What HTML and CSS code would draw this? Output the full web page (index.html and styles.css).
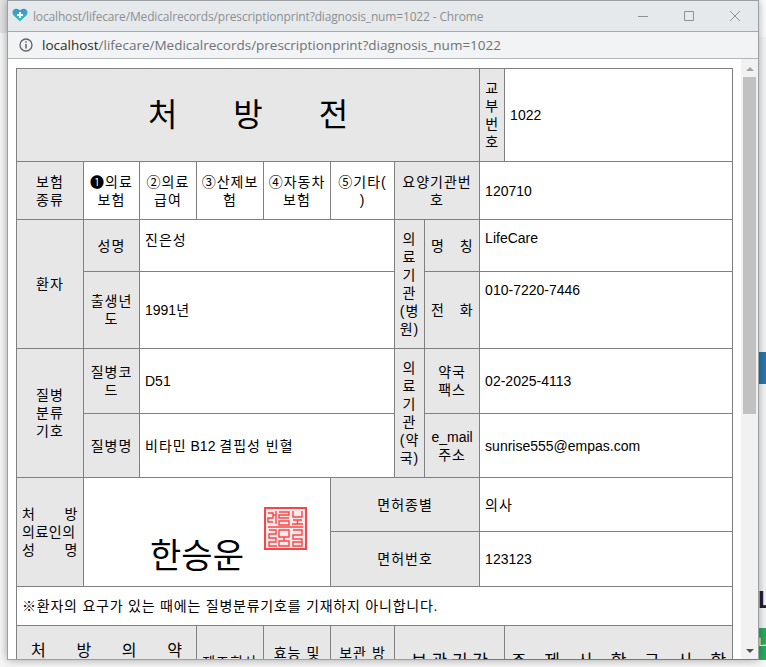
FILE: index.html
```html
<!DOCTYPE html>
<html lang="ko">
<head>
<meta charset="utf-8">
<title>처방전</title>
<link rel="stylesheet" href="styles.css">
</head>
<body>
<div class="desktop">
  <div class="bg-left"></div>
  <div class="bg-right-a"></div>
  <div class="bg-blue"></div>
  <div class="bg-letter">L</div>
  <div class="bg-green">나</div>
  <div class="window">
    <div class="titlebar">
      <svg class="heart" width="16" height="14" viewBox="0 0 16 14"><defs><linearGradient id="hg" x1="0" y1="0" x2="0" y2="1"><stop offset="0" stop-color="#3f8fd0"/><stop offset="1" stop-color="#35c9ae"/></linearGradient></defs><path d="M8 13.500 1.600 7.400C-.4 5.300.3 1.800 3 .9 4.900.3 6.800 1 8 2.600 9.200 1 11.100.3 13 .9c2.700.9 3.400 4.400 1.400 6.500z" fill="url(#hg)"/><path d="M7 4h2v2h2v2H9v2H7V8H5V6h2z" fill="#fff"/></svg>
      <span class="wintitle">localhost/lifecare/Medicalrecords/prescriptionprint?diagnosis_num=1022 - Chrome</span>
      <div class="winctl">
        <svg width="12" height="12" viewBox="0 0 12 12"><path d="M1 6.500h10" stroke="#8d9195" fill="none"/></svg>
        <svg width="12" height="12" viewBox="0 0 12 12"><path d="M1.500 1.500h9v9h-9z" stroke="#8d9195" fill="none"/></svg>
        <svg width="12" height="12" viewBox="0 0 12 12"><path d="M1 1l10 10M11 1 1 11" stroke="#8d9195" fill="none"/></svg>
      </div>
    </div>
    <div class="addressbar">
      <svg width="14" height="14" viewBox="0 0 14 14"><circle cx="7" cy="7" r="6" stroke="#5f6368" stroke-width="1.300" fill="none"/><path d="M7 6v4.500" stroke="#5f6368" stroke-width="1.500"/><path d="M7 3.300v1.500" stroke="#5f6368" stroke-width="1.500"/></svg>
      <span class="url"><span class="host">localhost</span>/lifecare/Medicalrecords/prescriptionprint?diagnosis_num=1022</span>
    </div>
    <div class="viewport">
      <div class="page">
        <table class="rx">
          <colgroup>
            <col class="c1"><col class="c2"><col class="c3"><col class="c4"><col class="c5"><col class="c6"><col class="c7"><col class="c8"><col class="c9"><col class="c10">
          </colgroup>
          <tr class="r1">
            <th colspan="8" class="ko title">처 방 전</th>
            <th class="ko vert">교<br>부<br>번<br>호</th>
            <td>1022</td>
          </tr>
          <tr class="r2">
            <th class="ko">보험<br>종류</th>
            <td class="ko ctr">❶의료<br>보험</td>
            <td class="ko ctr">②의료<br>급여</td>
            <td class="ko ctr">③산제보<br>험</td>
            <td class="ko ctr">④자동차<br>보험</td>
            <td class="ko ctr">⑤기타(<br>)</td>
            <th colspan="2" class="ko">요양기관번<br>호</th>
            <td colspan="2">120710</td>
          </tr>
          <tr class="r3">
            <th rowspan="2" class="ko">환자</th>
            <th class="ko">성명</th>
            <td colspan="4" class="ko top name">진은성</td>
            <th rowspan="2" class="ko tight">의<br>료<br>기<br>관<br>(병<br>원)</th>
            <th class="ko just">명 칭</th>
            <td colspan="2" class="top">LifeCare</td>
          </tr>
          <tr class="r4">
            <th class="ko">출생년<br>도</th>
            <td colspan="4">1991<span class="ko">년</span></td>
            <th class="ko just">전 화</th>
            <td colspan="2" class="top phone">010-7220-7446</td>
          </tr>
          <tr class="r5">
            <th rowspan="2" class="ko">질병<br>분류<br>기호</th>
            <th class="ko">질병코<br>드</th>
            <td colspan="4">D51</td>
            <th rowspan="2" class="ko tight">의<br>료<br>기<br>관<br>(약<br>국)</th>
            <th class="ko">약국<br>팩스</th>
            <td colspan="2">02-2025-4113</td>
          </tr>
          <tr class="r6">
            <th class="ko">질병명</th>
            <td colspan="4"><span class="ko">비타민</span> B12 <span class="ko">결핍성 빈혈</span></td>
            <th>e_mail<br><span class="ko">주소</span></th>
            <td colspan="2">sunrise555@empas.com</td>
          </tr>
          <tr class="r7">
            <th rowspan="2" class="ko just doctor">처 방<br>의료인의<br>성 명</th>
            <td rowspan="2" colspan="4" class="signer">
              <span class="signame">한승운</span>
              <svg class="seal" width="43" height="43" viewBox="0 0 43 43" fill="#fde9e9" stroke="#f4474a"><rect x="1" y="1" width="41" height="41" stroke-width="2"/><g stroke-width="1.400" fill="none"><path d="M4 6h5v5H4v4h5M12 4v13M9 8h3M15 5h10v3H15v3h10M15 14h10v4H15zM29 4v6h9V4M29 13h9M33.500 13v4M28 17h11M4 20h35M5 23h7v4H5v4h7v4H5v4h8M15 23h10v7H15zM20 30v4M15 34h10v5H15zM29 23h9v5h-9v4h9v7h-9v-4h9"/></g></svg>
            </td>
            <th colspan="3" class="ko">면허종별</th>
            <td colspan="2" class="ko">의사</td>
          </tr>
          <tr class="r8">
            <th colspan="3" class="ko">면허번호</th>
            <td colspan="2">123123</td>
          </tr>
          <tr class="r9">
            <td colspan="10" class="note ko">※환자의 요구가 있는 때에는 질병분류기호를 기재하지 아니합니다.</td>
          </tr>
          <tr class="r10">
            <th colspan="3" class="ko big just wide">처 방 의 약<br>품 의 명 칭</th>
            <th class="ko">제조회사</th>
            <th class="ko">효능 및<br>효과</th>
            <th class="ko">보관 방<br>법</th>
            <th colspan="3" class="ko big">보 관 기 간</th>
            <th class="ko big just">주 제 사 항 구 사 항</th>
          </tr>
        </table>
      </div>
      <div class="scrollbar">
        <div class="arrow-up"></div>
        <div class="thumb"></div>
        <div class="arrow-down"></div>
      </div>
    </div>
  </div>
  <div class="bg-greenline"></div>
</div>
</body>
</html>
```
FILE: styles.css
```css
html, body {
  margin: 0;
  padding: 0;
  height: 100%;
  overflow: hidden;
}
.desktop {
  position: relative;
  width: 766px;
  height: 667px;
  overflow: hidden;
  background: #f7f7f7;
  font-family: "Liberation Sans", "Noto Sans CJK KR", sans-serif;
}
.bg-left {
  position: absolute;
  left: 0;
  top: 0;
  width: 7px;
  height: 33px;
  background: #e4e4e4;
}
.bg-right-a {
  position: absolute;
  right: 0;
  top: 0;
  width: 8px;
  height: 37px;
  background: #ffffff;
}
.bg-blue {
  position: absolute;
  right: 0;
  top: 352px;
  width: 8px;
  height: 32px;
  background: #2a78ad;
}
.bg-letter {
  position: absolute;
  left: 758px;
  top: 588px;
  font-size: 24px;
  line-height: 24px;
  font-weight: 700;
  color: #222222;
}
.bg-green {
  position: absolute;
  left: 758px;
  top: 628px;
  width: 8px;
  height: 32px;
  overflow: hidden;
  background: #27ae60;
  color: #ffffff;
  font-size: 14px;
  line-height: 30px;
}
.bg-greenline {
  position: absolute;
  left: 452px;
  top: 659px;
  width: 306px;
  height: 1px;
  background: #4f8f6f;
}
.window {
  position: absolute;
  left: 7px;
  top: 0;
  width: 750px;
  height: 658px;
  display: flex;
  flex-direction: column;
  border: 1px solid #9a9fa3;
  background: #ffffff;
  box-shadow: 0 0 9px rgba(0, 0, 0, 0.35);
}
.titlebar {
  height: 30px;
  flex: none;
  display: flex;
  align-items: center;
  padding-left: 4px;
  background: #e6e9eb;
  border-bottom: 1px solid #a6aaad;
}
.heart {
  flex: none;
  margin-right: 5px;
  margin-top: -2px;
}
.wintitle {
  flex: 1;
  font-family: "Open Sans", sans-serif;
  font-size: 12px;
  letter-spacing: -0.16px;
  color: #8b8f92;
  white-space: nowrap;
}
.winctl {
  display: flex;
  align-items: center;
  gap: 34px;
  padding-right: 17px;
}
.addressbar {
  height: 26px;
  flex: none;
  display: flex;
  align-items: center;
  gap: 9px;
  padding-left: 11px;
  background: #f1f3f4;
  border-bottom: 1px solid #b4b7b9;
}
.url {
  font-family: "Open Sans", sans-serif;
  font-size: 13.5px;
  color: #6e7276;
  white-space: nowrap;
}
.host {
  color: #2b2b2b;
}
.viewport {
  flex: 1;
  min-height: 0;
  display: flex;
}
.page {
  flex: 1;
  min-width: 0;
  overflow: hidden;
  padding: 9px 0 0 8px;
}
.scrollbar {
  width: 17px;
  flex: none;
  display: flex;
  flex-direction: column;
  align-items: center;
  background: #f1f1f1;
  position: relative;
}
.arrow-up {
  flex: none;
  width: 0;
  height: 0;
  margin-top: 8px;
  border-left: 4px solid transparent;
  border-right: 4px solid transparent;
  border-bottom: 4px solid #a3a3a3;
}
.thumb {
  flex: none;
  width: 13px;
  height: 337px;
  margin-top: 6px;
  background: #c1c1c1;
}
.arrow-down {
  flex: none;
  width: 0;
  height: 0;
  margin-top: auto;
  margin-bottom: 6px;
  border-left: 4px solid transparent;
  border-right: 4px solid transparent;
  border-top: 4px solid #505050;
}
.rx {
  table-layout: fixed;
  border-collapse: collapse;
  width: 717px;
  font-size: 14px;
  line-height: 18px;
  color: #000000;
}
.c1 { width: 67px; }
.c2 { width: 56px; }
.c3 { width: 57px; }
.c4 { width: 67px; }
.c5 { width: 67px; }
.c6 { width: 64px; }
.c7 { width: 30px; }
.c8 { width: 55px; }
.c9 { width: 25px; }
.c10 { width: 228px; }
.rx th, .rx td {
  border: 1px solid #808080;
  padding: 0 5px;
  vertical-align: middle;
  font-weight: 400;
  overflow: hidden;
}
.rx th {
  background: #e7e7e7;
  text-align: center;
}
.rx td {
  background: #ffffff;
  text-align: left;
}
.ko { letter-spacing: 1px; }
.r1 { height: 93px; }
.r2 { height: 58px; }
.r3 { height: 52px; }
.r4 { height: 77px; }
.r5 { height: 65px; }
.r6 { height: 64px; }
.r7 { height: 54px; }
.r8 { height: 55px; }
.r9 { height: 39px; }
.r10 { height: 72px; }
.rx th.title {
  font-size: 32px;
  line-height: 40px;
  word-spacing: 47px;
  letter-spacing: 0;
}
.rx th.vert, .rx th.tight {
  padding: 0;
}
.rx td.ctr {
  text-align: center;
  padding: 0;
}
.rx .top {
  vertical-align: top;
  padding-top: 9px;
}
.rx .name {
  padding-top: 11px;
}
.rx .phone {
  padding-top: 9px;
}
.rx th.just {
  text-align: justify;
  text-align-last: justify;
  padding: 0 6px;
  letter-spacing: 0.5px;
}
.rx th.doctor {
  padding: 0 5px;
}
.rx th.big {
  font-size: 17px;
  line-height: 26px;
  letter-spacing: 0;
}
.rx th.wide {
  font-size: 16px;
  line-height: 22px;
  padding: 0 14px;
}
.rx td.signer {
  position: relative;
  text-align: center;
  padding: 47px 20px 0 0;
}
.signame {
  font-size: 34px;
  line-height: 40px;
  letter-spacing: 0;
}
.seal {
  position: absolute;
  left: 180px;
  top: 29px;
}
.rx td.note {
  padding-left: 5px;
  letter-spacing: 0.78px;
}
```
